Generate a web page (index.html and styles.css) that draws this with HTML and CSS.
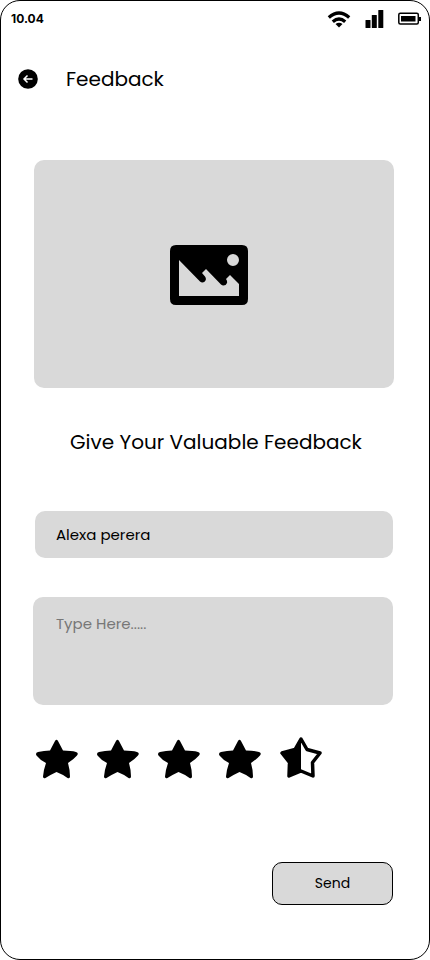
FILE: index.html
```html
<!DOCTYPE html>
<html lang="en">
<head>
<meta charset="utf-8">
<meta name="viewport" content="width=device-width, initial-scale=1">
<title>Feedback</title>
<link rel="stylesheet" href="styles.css">
</head>
<body>
<svg class="symbols" aria-hidden="true">
  <symbol id="star" viewBox="0 0 42 40">
    <path d="M19 2Q20.500-.500 22 2L27 11.500Q35 11.500 40 13Q43 14 41 16.500Q38 20 32 24Q34 31 34 37.500Q34 40 31.500 39Q27 35.500 20.500 33Q15 35.500 9.500 39Q7 40 7 37.500Q7.500 31 10 24Q4 21 .500 16.500Q-1 14 2 13Q8 11.500 14 11.500Z"/>
  </symbol>
  <symbol id="half-star" viewBox="0 0 42 42">
    <path d="M21 2L27 12.500L40 16L32.500 25.500L33 39L21 34L9 39L9.500 25.500L2 16L15 12.500Z" fill="none" stroke="currentColor" stroke-width="3.500" stroke-linejoin="round"/>
    <path d="M21 2V34L9 39L9.500 25.500L2 16L15 12.500Z"/>
  </symbol>
</svg>
<div class="screen">
  <div class="status">
    <time class="clock">10.04</time>
    <div class="indicators">
      <svg class="wifi" viewBox="0 0 24 18" role="img" aria-label="Wi-Fi">
        <g fill="none" stroke="currentColor" stroke-width="3.300">
          <path d="M1.800 7.500Q12-1.500 22.200 7.500"/><path d="M5.800 11.800Q12 6.300 18.200 11.800"/>
        </g>
        <path d="M8.500 14Q12 11.500 15.500 14L12 17.500Z"/>
      </svg>
      <svg class="signal" viewBox="0 0 18 18" role="img" aria-label="Signal">
        <rect y="10" width="5" height="8" rx=".500"/><rect x="6.300" y="5" width="5" height="13" rx=".500"/><rect x="12.800" width="5" height="18" rx=".500"/>
      </svg>
      <svg class="battery" viewBox="0 0 24 14" role="img" aria-label="Battery">
        <rect x=".800" y="1.300" width="19.500" height="10.700" rx="1.500" fill="none" stroke="currentColor" stroke-width="1.500"/>
        <rect x="3" y="4" width="14.500" height="5.500"/><path d="M21 5h2v4h-2z"/>
      </svg>
    </div>
  </div>
  <header class="header">
    <button class="back" type="button" aria-label="Back">
      <svg viewBox="0 0 20 20">
        <circle cx="10" cy="10" r="9.800"/>
        <path d="M14.500 10H6M9.500 6.500L6 10L9.500 13.500" fill="none" stroke="#fff" stroke-width="1.500"/>
      </svg>
    </button>
    <h1 class="title">Feedback</h1>
  </header>
  <main class="content">
    <div class="picture">
      <svg class="picture-icon" viewBox="0 0 78 60" role="img" aria-label="Picture">
        <path fill-rule="evenodd" d="M6 0H72Q78 0 78 6V54Q78 60 72 60H6Q0 60 0 54V6Q0 0 6 0ZM9 15V51H69V39L60 30L56 34Q57.500 36 57 38Q56 40.500 53.500 40.500Q52 40.500 51 39.500L36 24L32 28L35 31.500Q36.500 33.500 35.500 35.500Q34.500 37.500 32.500 37.500Q31 37.500 30 36.500ZM69 15A6 6 0 1 0 57 15A6 6 0 1 0 69 15Z"/>
      </svg>
    </div>
    <h2 class="prompt">Give Your Valuable Feedback</h2>
    <form class="form">
      <input class="field name" type="text" value="Alexa perera" aria-label="Name">
      <textarea class="field message" placeholder="Type Here....." aria-label="Feedback message"></textarea>
      <div class="rating" role="group" aria-label="Rating: 4.5 of 5">
        <button class="star" type="button" aria-label="1 star"><svg><use href="#star"/></svg></button>
        <button class="star" type="button" aria-label="2 stars"><svg><use href="#star"/></svg></button>
        <button class="star" type="button" aria-label="3 stars"><svg><use href="#star"/></svg></button>
        <button class="star" type="button" aria-label="4 stars"><svg><use href="#star"/></svg></button>
        <button class="star" type="button" aria-label="5 stars"><svg class="half"><use href="#half-star"/></svg></button>
      </div>
      <button class="send" type="submit">Send</button>
    </form>
  </main>
</div>
</body>
</html>
```
FILE: styles.css
```css
* { box-sizing: border-box; }

body {
  margin: 0;
  background: #fff;
  color: #000;
  font-family: Poppins, Inter, sans-serif;
}

svg { display: block; fill: currentColor; }
button { padding: 0; border: 0; background: none; color: inherit; font: inherit; }

.symbols { display: none; }

.screen {
  min-height: 100vh;
  border: 1px solid #000;
  border-radius: 20px;
}

.status {
  display: flex;
  justify-content: space-between;
  align-items: center;
  height: 36px;
  padding: 0 7px 0 10px;
}
.clock { font: 700 12px/16px Inter, sans-serif; }
.indicators { display: flex; align-items: center; gap: 14px; }
.wifi { width: 24px; height: 18px; }
.signal { width: 19px; height: 18px; }
.battery { width: 24px; height: 14px; }

.header {
  display: flex;
  align-items: center;
  gap: 28px;
  height: 84px;
  padding: 0 17px;
}
.back svg { width: 20px; height: 20px; }
.title, .prompt { margin: 0; font-size: 20px; line-height: 30px; font-weight: 400; }

.content { padding: 39px 36px 54px 32px; }
.picture {
  display: flex;
  justify-content: center;
  align-items: center;
  height: 228px;
  margin-left: 1px;
  margin-right: -1px;
  padding: 2px 10px 0 0;
  border-radius: 10px;
  background: #d9d9d9;
}
.picture-icon { width: 78px; height: 60px; }
.prompt { margin-top: 39px; padding-left: 6px; text-align: center; }

.form { display: flex; flex-direction: column; margin-top: 54px; }
.field {
  border: 0;
  border-radius: 10px;
  background: #d9d9d9;
  color: #000;
  font: 400 15px/22px Poppins, Inter, sans-serif;
}
.name { height: 47px; margin-left: 2px; padding: 0 21px; }
.message { height: 108px; margin-top: 39px; padding: 16px 23px; resize: none; }
.message::placeholder { color: #777; opacity: 1; }

.rating { display: flex; gap: 19px; margin: 32px 0 0 3px; }
.star { width: 42px; height: 44px; }
.star svg { width: 42px; height: 40px; }
.star .half { height: 42px; margin-bottom: 2px; }

.send {
  align-self: flex-end;
  width: 121px;
  height: 43px;
  margin-top: 81px;
  border: 1px solid #000;
  border-radius: 10px;
  background: #d9d9d9;
  font-size: 14px;
}
```
